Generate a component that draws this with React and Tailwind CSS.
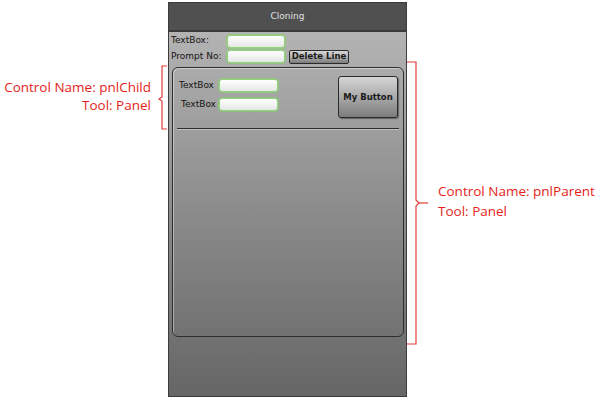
import React from "react";

const tb =
  "h-[13px] rounded-[3px] border border-[#8fd47a] bg-gradient-to-b from-[#ffffff] to-[#e6e6e6] shadow-[0_0_1px_1px_rgba(140,210,110,0.6)]";

function LeftBracket() {
  return (
    <svg width="14" height="66" viewBox="0 0 14 66" className="absolute left-[154px] top-[65px]">
      <path d="M13 1 H8 V32 L5 34 L8 36 V64 H13" fill="none" stroke="#e23b3b" strokeWidth="1.2" />
    </svg>
  );
}

function RightBracket() {
  return (
    <svg width="26" height="286" viewBox="0 0 26 286" className="absolute left-[406px] top-[60px]">
      <path d="M1 2 H10 V140 L13 143 L10 146 V284 H1" fill="none" stroke="#e23b3b" strokeWidth="1.2" />
      <path d="M13 143 H22" fill="none" stroke="#e23b3b" strokeWidth="1.2" />
    </svg>
  );
}

export default function App() {
  return (
    <div
      className="relative w-[600px] h-[403px] bg-white overflow-hidden"
      style={{ fontFamily: "Verdana, 'DejaVu Sans', sans-serif" }}
    >
      {/* phone mock */}
      <div className="absolute left-[168px] top-[2px] w-[239px] h-[395px] border border-[#3c3c3c] flex flex-col bg-gradient-to-b from-[#bababa] via-[#8e8e8e] to-[#666666]">
        <div className="h-[29px] shrink-0 bg-[#505050] border-b-2 border-[#3a3a3a] flex items-center justify-center text-[9px] text-[#e0e0e0]">
          Cloning
        </div>
        <div className="pt-[2px] pl-[2px] pr-[3px] flex flex-col">
          <div className="flex items-center h-[14px]">
            <span className="w-[56px] text-[9px] text-[#141414]">TextBox:</span>
            <div className={tb + " w-[58px]"} />
          </div>
          <div className="flex items-center h-[15px] mt-[1px]">
            <span className="w-[56px] text-[9px] text-[#141414]">Prompt No:</span>
            <div className={tb + " w-[58px]"} />
            <div className="ml-[4px] w-[60px] h-[14px] rounded-[2px] border border-[#2a2a2a] bg-gradient-to-b from-[#d8d8d8] via-[#b0b0b0] to-[#7a7a7a] flex items-center justify-center text-[8.5px] font-bold text-[#1a1a1a]">
              Delete Line
            </div>
          </div>
          {/* pnlParent */}
          <div className="mt-[3px] ml-[1px] w-[232px] h-[270px] rounded-[6px] border border-[#2e2e2e] shadow-[inset_1px_1px_0_rgba(255,255,255,0.4)] flex flex-col">
            {/* pnlChild */}
            <div className="flex justify-between pl-[6px] pr-[5px] pt-[8px]">
              <div className="flex flex-col pt-[3px]">
                <div className="flex items-center h-[13px]">
                  <span className="w-[40px] text-[9px] text-[#141414]">TextBox</span>
                  <div className={tb + " w-[59px]"} />
                </div>
                <div className="flex items-center h-[13px] mt-[6px] pl-[2px]">
                  <span className="w-[38px] text-[9px] text-[#141414]">TextBox</span>
                  <div className={tb + " w-[59px]"} />
                </div>
              </div>
              <div className="w-[60px] h-[42px] rounded-[3px] border border-[#2a2a2a] bg-gradient-to-b from-[#d6d6d6] via-[#a9a9a9] to-[#7c7c7c] shadow-[1px_1px_1px_rgba(0,0,0,0.4)] flex items-center justify-center text-[8.5px] font-bold text-[#1a1a1a]">
                My Button
              </div>
            </div>
            <div className="mx-[4px] mt-[10px] h-[2px] bg-[#2e2e2e] border-b border-[#bdbdbd]" />
          </div>
        </div>
      </div>

      <LeftBracket />
      <RightBracket />

      {/* annotations */}
      <div
        className="absolute left-[0px] top-[78px] w-[151px] flex flex-col items-end text-[13.5px] leading-[18px] text-[#e41e1a]"
        style={{ fontFamily: "'Open Sans', 'Liberation Sans', sans-serif" }}
      >
        <span>Control Name: pnlChild</span>
        <span>Tool: Panel</span>
      </div>
      <div
        className="absolute left-[438px] top-[181px] flex flex-col text-[13.5px] leading-[20px] text-[#e41e1a]"
        style={{ fontFamily: "'Open Sans', 'Liberation Sans', sans-serif" }}
      >
        <span>Control Name: pnlParent</span>
        <span>Tool: Panel</span>
      </div>
    </div>
  );
}
